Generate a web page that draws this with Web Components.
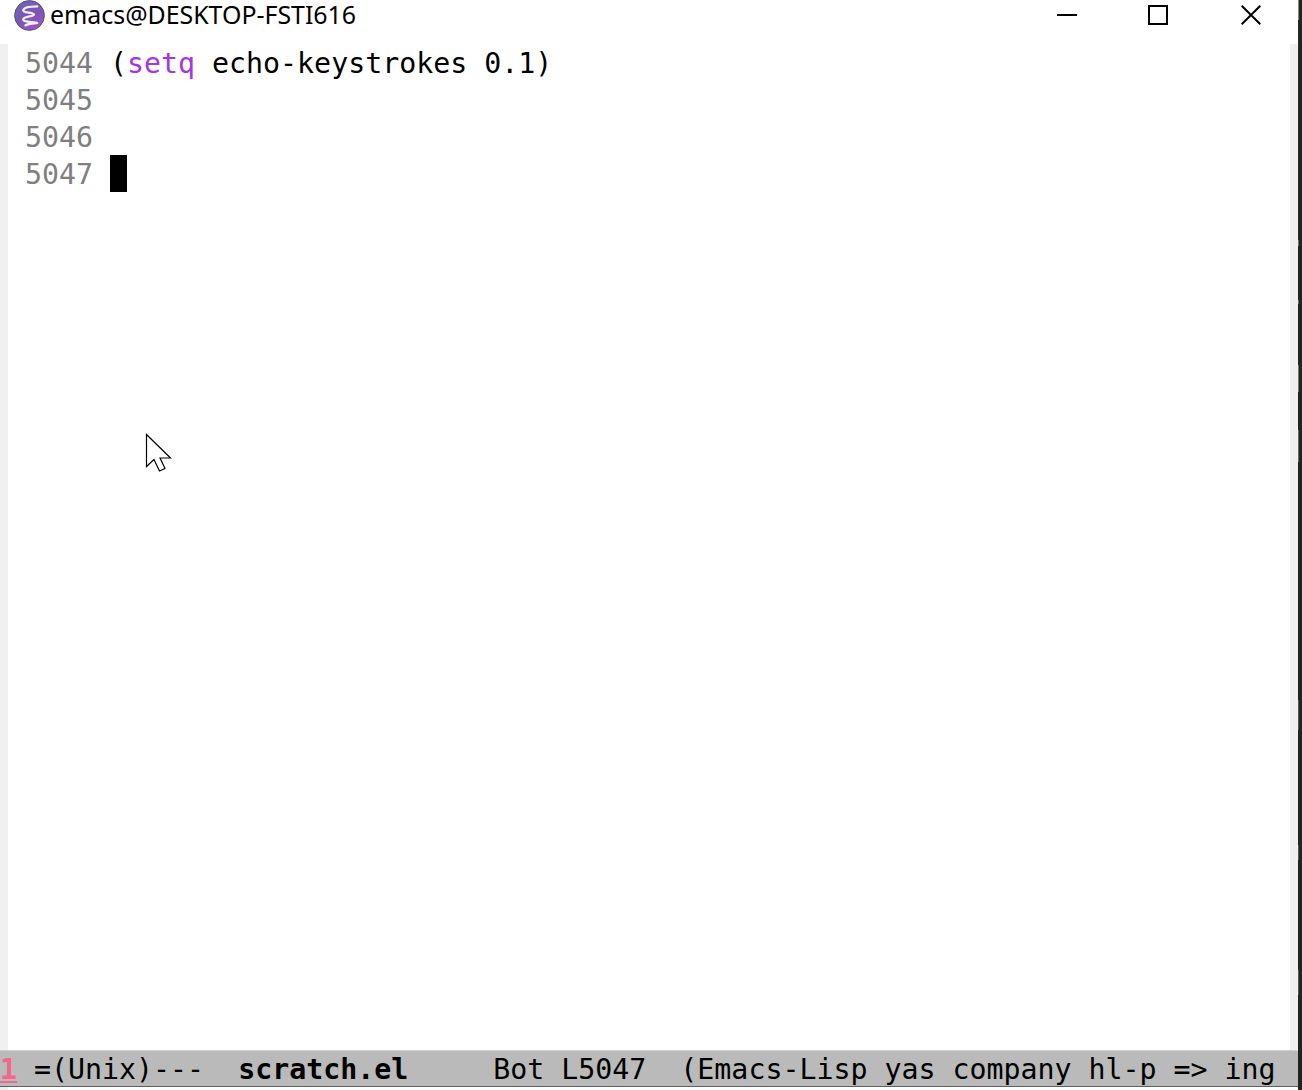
<!DOCTYPE html>
<html>
<head>
<meta charset="utf-8">
<title>emacs</title>
<style>
  html,body{margin:0;padding:0;height:100%;background:#fff;overflow:hidden}
</style>
</head>
<body>
<emacs-frame>
  <emacs-titlebar slot="title">emacs@DESKTOP-FSTI616</emacs-titlebar>
  <emacs-buffer slot="buffer">
    <code-line num="5044">(<span style="color:#a435e8">setq</span> echo-keystrokes 0.1)</code-line>
    <code-line num="5045"></code-line>
    <code-line num="5046"></code-line>
    <code-line num="5047" cursor></code-line>
  </emacs-buffer>
  <emacs-modeline slot="mode"></emacs-modeline>
</emacs-frame>
<script>
const MONO = `"DejaVu Sans Mono","Liberation Mono",monospace`

class EmacsFrame extends HTMLElement {
  constructor(){
    super()
    this.attachShadow({mode:'open'}).innerHTML = `
    <style>
      :host{display:grid;grid-template-columns:1298px 4px;width:1302px;height:1090px}
      .win{display:flex;flex-direction:column;height:1090px;background:#fff}
      .strip{background:
        linear-gradient(180deg,#8b8780 0,#8b8780 20px,#2a2a28 20px,#2a2a28 240px,#77736c 240px,#77736c 246px,#23231f 246px,#23231f 300px,#6f6b66 300px,#6f6b66 304px,#23231f 304px,#23231f 365px,#77736c 365px,#77736c 392px,#23231f 392px,#23231f 430px,#6f6b66 430px,#6f6b66 462px,#23231f 462px,#23231f 700px,#5c5955 700px,#5c5955 730px,#23231f 730px,#23231f 845px,#5c5955 845px,#5c5955 860px,#23231f 860px,#23231f 970px,#5c5955 970px,#5c5955 995px,#23231f 995px);
        background-size:1px 100%;background-repeat:no-repeat;background-color:#23231f}
      .below{height:3px;display:grid;grid-template-columns:8px 1fr;background:#fff}
      .below i{background:#f0f0f0}
    </style>
    <div class="win">
      <slot name="title"></slot>
      <slot name="buffer"></slot>
      <slot name="mode"></slot>
      <div class="below"><i></i></div>
    </div>
    <div class="strip"></div>`
  }
}

class EmacsTitlebar extends HTMLElement {
  constructor(){
    super()
    this.attachShadow({mode:'open'}).innerHTML = `
    <style>
      :host{display:flex;align-items:flex-start;height:44px;flex:none;background:#fff;color:#000;
        font:24.9px "Noto Sans","Open Sans",sans-serif;position:relative}
      .icon{width:31px;height:31px;margin:0 5.5px 0 13.5px;flex:none}
      .name{line-height:28px;white-space:pre}
      .btns{margin-left:auto;display:flex;margin-right:1px}
      .btn{width:92px;height:30px;display:flex;align-items:center;justify-content:center}
      .btn.max{padding-right:2px;width:90px}
      .btn svg{width:20px;height:20px;display:block}
    </style>
    <svg class="icon" viewBox="0 0 32 32">
      <defs><linearGradient id="g" x1="0.2" y1="0" x2="0.8" y2="1">
        <stop offset="0" stop-color="#6f63b4"/><stop offset="0.55" stop-color="#7d55b8"/><stop offset="1" stop-color="#a453c4"/>
      </linearGradient></defs>
      <circle cx="16" cy="16" r="15.4" fill="url(#g)" stroke="#4e4a66" stroke-width="0.9"/>
      <path d="M24 6.5C18 6.6 10 7.6 9.6 10.6c-.3 2.8 11 2 11 4.4 0 2.2-10.2 1.6-11 4.8-.6 2.8 8 3 14.4 3.8-4 .5-9.5 1-12.2 2.6" fill="none" stroke="#f3eefa" stroke-width="2.4" stroke-linecap="round" stroke-linejoin="round"/>
    </svg>
    <span class="name"><slot></slot></span>
    <div class="btns">
      <div class="btn"><svg viewBox="0 0 20 20"><path d="M0 10H20" stroke="#000" stroke-width="2"/></svg></div>
      <div class="btn max"><svg viewBox="0 0 20 20"><rect x="1" y="1" width="18" height="18" fill="none" stroke="#000" stroke-width="2"/></svg></div>
      <div class="btn"><svg viewBox="0 0 20 20"><path d="M.7.7 19.3 19.3M19.3.7.7 19.3" stroke="#000" stroke-width="2"/></svg></div>
    </div>`
  }
}

class EmacsBuffer extends HTMLElement {
  constructor(){
    super()
    this.attachShadow({mode:'open'}).innerHTML = `
    <style>
      :host{display:grid;grid-template-columns:8px 1fr 8px;flex:1;min-height:0;background:#fff;position:relative}
      .fringe{background:#f0f0f0}
      .text{padding-top:1px;display:flex;flex-direction:column}
      .pointer{position:absolute;left:145px;top:389px;width:28px;height:40px}
    </style>
    <div class="fringe"></div>
    <div class="text"><slot></slot></div>
    <div class="fringe"></div>
    <svg class="pointer" viewBox="0 0 28 40">
      <path d="M1.5 1.5V33.5L9 26.5 14.5 38 20 35.5 15 25H25.5Z" fill="#fff" stroke="#000" stroke-width="1.2" stroke-linejoin="miter"/>
    </svg>`
  }
}

class CodeLine extends HTMLElement {
  constructor(){
    super()
    this.attachShadow({mode:'open'}).innerHTML = `
    <style>
      :host{display:flex;height:37px;font:28.25px/37px ${MONO};color:#000;white-space:pre}
      .num{padding-left:17px;color:#7f7f7f;flex:none;width:68px}
      .gap{width:17px;flex:none}
      .cursor{width:17px;height:37px;background:#000;margin-top:-1px;flex:none}
    </style>
    <span class="num"></span><span class="gap"></span><span class="body"><slot></slot></span>`
    this.shadowRoot.querySelector('.num').textContent = this.getAttribute('num')
    if(this.hasAttribute('cursor')){
      const c = document.createElement('div')
      c.className = 'cursor'
      this.shadowRoot.appendChild(c)
    }
  }
}

class EmacsModeline extends HTMLElement {
  constructor(){
    super()
    this.attachShadow({mode:'open'}).innerHTML = `
    <style>
      :host{display:block;flex:none;height:37px;box-sizing:border-box;background:#bababa;
        border-top:1px solid #d0d0d0;border-bottom:1px solid #5f5f5f;
        font:28.25px/35px ${MONO};color:#000}
      .row{white-space:pre;height:35px;padding-top:1px;box-sizing:border-box}
      .n{color:#f0688c;font-weight:bold;text-decoration:underline}
      b{font-weight:bold}
    </style>
    <div class="row"><span class="n">1</span> =(Unix)---  <b>scratch.el</b>     Bot L5047  (Emacs-Lisp yas company hl-p =&gt; ing</div>`
  }
}

customElements.define('emacs-frame',EmacsFrame)
customElements.define('emacs-titlebar',EmacsTitlebar)
customElements.define('emacs-buffer',EmacsBuffer)
customElements.define('code-line',CodeLine)
customElements.define('emacs-modeline',EmacsModeline)
</script>
</body>
</html>
